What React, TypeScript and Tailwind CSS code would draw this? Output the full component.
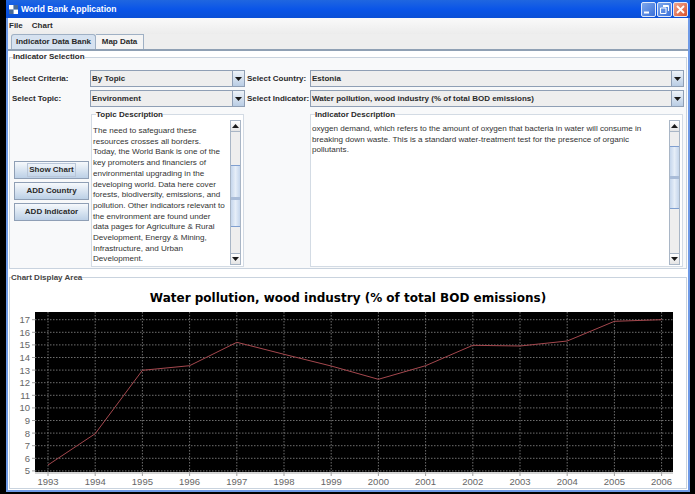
const topicText = [
  'The need to safeguard these',
  'resources crosses all borders.',
  'Today, the World Bank is one of the',
  'key promoters and financiers of',
  'environmental upgrading in the',
  'developing world. Data here cover',
  'forests, biodiversity, emissions, and',
  'pollution. Other indicators relevant to',
  'the environment are found under',
  'data pages for Agriculture & Rural',
  'Development, Energy & Mining,',
  'Infrastructure, and Urban',
  'Development.',
];

const indicatorText = [
  'oxygen demand, which refers to the amount of oxygen that bacteria in water will consume in',
  'breaking down waste. This is a standard water-treatment test for the presence of organic',
  'pollutants.',
];

const years = [1993, 1994, 1995, 1996, 1997, 1998, 1999, 2000, 2001, 2002, 2003, 2004, 2005, 2006];
const yTicks = [17, 16, 15, 14, 13, 12, 11, 10, 9, 8, 7, 6, 5];
const lineY = [153, 121.7, 58.3, 53.7, 30.3, 42.3, 54, 67.3, 53.7, 33.3, 34, 29, 9.3, 7.7];

const xAt = (i: number) => 37 + i * 47.2;
const yAt = (t: number) => 7.7 + (17 - t) * 12.6;

function Arrow({ up = false }: { up?: boolean }) {
  return (
    <svg width="7" height="4" viewBox="0 0 7 4" className="block">
      <path d={up ? 'M3.5 0 L7 4 L0 4 Z' : 'M0 0 L7 0 L3.5 4 Z'} fill="#1a1a1a" />
    </svg>
  );
}

function Combo({ value }: { value: string }) {
  return (
    <div className="flex h-[17px] min-w-0 flex-1 border border-[#8f9fb5] bg-[#eeeeee]">
      <div className="flex-1 pl-[1px] text-[8px] leading-[15px] font-bold text-[#2a2a2a]">{value}</div>
      <div className="flex w-[12px] items-center justify-center border-l border-[#8f9fb5] bg-gradient-to-b from-[#eef3f9] to-[#b9cde4]">
        <Arrow />
      </div>
    </div>
  );
}

function Scrollbar({ thumbTop, thumbHeight, gripAt }: { thumbTop: string; thumbHeight: string; gripAt: string }) {
  return (
    <div className="flex w-[11px] shrink-0 flex-col border border-[#a9b6c6] bg-[#eeeeee]">
      <div className="flex h-[11px] items-center justify-center border-b border-[#a9b6c6] bg-gradient-to-b from-white to-[#e4e4e4]">
        <Arrow up />
      </div>
      <div className="flex flex-1 flex-col">
        <div className={thumbTop} />
        <div className={`${thumbHeight} flex flex-col border-y border-[#7f9fd0] bg-gradient-to-r from-[#c5d6ec] via-[#e6eef8] to-[#c5d6ec]`}>
          <div className={gripAt} />
          <div className="h-[3px] bg-[#a9bcd8]" />
        </div>
      </div>
      <div className="flex h-[11px] items-center justify-center border-t border-[#a9b6c6] bg-gradient-to-b from-white to-[#e4e4e4]">
        <Arrow />
      </div>
    </div>
  );
}

function ActionButton({ label, focused = false }: { label: string; focused?: boolean }) {
  return (
    <button className="flex h-[18px] w-[75px] items-center justify-center border border-[#8f9fb5] bg-gradient-to-b from-[#f6f9fc] to-[#bcd0e6] text-[8px] font-bold text-[#2a2a2a]">
      <span className={focused ? 'border border-[#b9c6d8] px-[1px] leading-[12px]' : 'leading-[12px]'}>{label}</span>
    </button>
  );
}

function TitleButton({ kind }: { kind: 'min' | 'max' | 'close' }) {
  const bg =
    kind === 'close'
      ? 'bg-gradient-to-br from-[#eda58e] to-[#d9502a]'
      : 'bg-gradient-to-br from-[#7fa8ec] to-[#3a6fd8]';
  return (
    <div className={`flex h-[15px] w-[15px] items-center justify-center rounded-[2px] border border-[#dfe9fa] ${bg}`}>
      <svg width="11" height="11" viewBox="0 0 11 11">
        {kind === 'min' && <rect x="1" y="7.5" width="5" height="2" fill="#fff" />}
        {kind === 'max' && (
          <path d="M4 1.5h5.5v5.5M1.5 4h5.5v5.5h-5.5z M4 2.5h5.5" fill="none" stroke="#fff" strokeWidth="1" />
        )}
        {kind === 'close' && <path d="M2 2l7 7M9 2l-7 7" stroke="#fff" strokeWidth="1.8" />}
      </svg>
    </div>
  );
}

function LineChart() {
  return (
    <svg width="668" height="176" viewBox="0 0 668 176" className="block">
      <rect x="24" y="0" width="638" height="160" fill="#000" />
      {yTicks.map((t) => (
        <g key={t}>
          <line x1="24" x2="662" y1={yAt(t)} y2={yAt(t)} stroke="#8a8a8a" strokeWidth="0.8" strokeDasharray="1.5 1.5" />
          <line x1="21" x2="24" y1={yAt(t)} y2={yAt(t)} stroke="#888" strokeWidth="0.8" />
          <text x="19" y={yAt(t) + 3.5} textAnchor="end" fontSize="9.5" fill="#666" fontFamily="'Liberation Sans', sans-serif">
            {t}
          </text>
        </g>
      ))}
      {years.map((year, i) => (
        <g key={year}>
          <line x1={xAt(i)} x2={xAt(i)} y1="0" y2="160" stroke="#8a8a8a" strokeWidth="0.8" strokeDasharray="1.5 1.5" />
          <line x1={xAt(i)} x2={xAt(i)} y1="160" y2="164" stroke="#888" strokeWidth="0.8" />
          <text x={xAt(i)} y="173" textAnchor="middle" fontSize="9.5" fill="#666" fontFamily="'Liberation Sans', sans-serif">
            {year}
          </text>
        </g>
      ))}
      <line x1="24" x2="662" y1="161" y2="161" stroke="#a8a8a8" strokeWidth="1" />
      <polyline
        points={lineY.map((y, i) => `${xAt(i)},${y}`).join(' ')}
        fill="none"
        stroke="#a5484e"
        strokeWidth="1"
      />
    </svg>
  );
}

export default function App() {
  return (
    <div className="flex h-[494px] w-[695px] bg-black pr-[5px] pb-[2px] pl-[6px] font-['Liberation_Sans',sans-serif]">
      <div className="flex w-[684px] min-w-0 flex-col border-x-[2px] border-b-[2px] border-[#6f9ae6] bg-[#eef0f3]">
        {/* Title bar */}
        <div className="mx-[-2px] flex h-[18px] items-center bg-gradient-to-b from-[#1f66e0] via-[#0a55e8] to-[#0a4fd6] pr-[2px] pl-[3px]">
          <div className="grid h-[9px] w-[9px] grid-cols-2 gap-[1px] bg-[#8fa8c8]">
            <div className="bg-white" />
            <div className="bg-[#4a6a94]" />
            <div className="bg-[#4a6a94]" />
            <div className="bg-white" />
          </div>
          <div className="ml-[3px] flex-1 text-[8.5px] font-bold text-white">World Bank Application</div>
          <div className="flex gap-[1px]">
            <TitleButton kind="min" />
            <TitleButton kind="max" />
            <TitleButton kind="close" />
          </div>
        </div>

        {/* Menu */}
        <div className="flex h-[16px] items-center gap-[9px] bg-gradient-to-b from-[#fafafa] to-[#ececec] pl-[1px] text-[8px] font-bold text-[#2a2a2a]">
          <span>File</span>
          <span>Chart</span>
        </div>

        {/* Tabs */}
        <div className="flex h-[17px] items-end border-b-[2px] border-[#8fa0b4] bg-[#eeeeee] pl-[3px]">
          <div className="flex h-[15px] w-[85px] items-center justify-center rounded-t-[3px] border border-b-0 border-[#9fb0c4] bg-[#d6e2f0] text-[8px] font-bold whitespace-nowrap text-[#2a2a2a]">
            Indicator Data Bank
          </div>
          <div className="flex h-[15px] w-[48px] items-center justify-center border border-b-0 border-l-0 border-[#9fb0c4] bg-[#f4f4f4] text-[8px] font-bold whitespace-nowrap text-[#2a2a2a]">
            Map Data
          </div>
        </div>

        {/* Tab content */}
        <div className="flex flex-1 flex-col gap-[3px] bg-white px-[1px] pb-[1px]">
          <fieldset className="flex h-[218px] min-w-0 flex-col border border-[#c9d3de] bg-[#f8f9fa] px-[2px]">
            <legend className="ml-[1px] text-[8px] leading-[12px] font-bold text-[#2a2a2a]">Indicator Selection</legend>
            <div className="mt-[7px] flex flex-col gap-[3px] text-[8px] font-bold text-[#2a2a2a]">
              <div className="flex items-center">
                <span className="w-[78px]">Select Criteria:</span>
                <div className="flex w-[155px]">
                  <Combo value="By Topic" />
                </div>
                <span className="w-[65px] pl-[2px] whitespace-nowrap">Select Country:</span>
                <Combo value="Estonia" />
              </div>
              <div className="flex items-center">
                <span className="w-[78px]">Select Topic:</span>
                <div className="flex w-[155px]">
                  <Combo value="Environment" />
                </div>
                <span className="w-[65px] pl-[2px] whitespace-nowrap">Select Indicator:</span>
                <Combo value="Water pollution, wood industry (% of total BOD emissions)" />
              </div>
            </div>

            <div className="mt-[2px] flex flex-1 pr-[1px] pb-[2px]">
              <div className="flex w-[79px] shrink-0 flex-col gap-[3px] pt-[52px] pl-[2px]">
                <ActionButton label="Show Chart" focused />
                <ActionButton label="ADD Country" />
                <ActionButton label="ADD Indicator" />
              </div>
              <fieldset className="flex w-[153px] min-w-0 shrink-0 flex-col border border-[#d3dbe4] bg-white pr-[2px] pb-[1px] pl-[1px]">
                <legend className="ml-[3px] text-[8px] leading-[11px] font-bold text-[#2a2a2a]">Topic Description</legend>
                <div className="flex flex-1">
                  <div className="min-w-0 flex-1 pt-[6px] text-[8.1px] leading-[10.7px] whitespace-nowrap text-[#333]">
                    {topicText.map((line) => (
                      <div key={line}>{line}</div>
                    ))}
                  </div>
                  <Scrollbar thumbTop="h-[33px]" thumbHeight="h-[62px]" gripAt="h-[31px]" />
                </div>
              </fieldset>
              <div className="w-[66px] shrink-0" />
              <fieldset className="flex min-w-0 flex-1 flex-col border border-[#d3dbe4] bg-white pr-[2px] pb-[1px] pl-[1px]">
                <legend className="ml-[3px] text-[8px] leading-[11px] font-bold text-[#2a2a2a]">Indicator Description</legend>
                <div className="flex flex-1">
                  <div className="min-w-0 flex-1 pt-[4px] text-[8.1px] leading-[10.7px] whitespace-nowrap text-[#333]">
                    {indicatorText.map((line) => (
                      <div key={line}>{line}</div>
                    ))}
                  </div>
                  <Scrollbar thumbTop="h-[14px]" thumbHeight="h-[63px]" gripAt="h-[29px]" />
                </div>
              </fieldset>
            </div>
          </fieldset>

          <fieldset className="flex min-w-0 flex-1 flex-col border border-[#c9d3de] bg-white px-[1px]">
            <legend className="text-[8px] leading-[11px] font-bold text-[#444]">Chart Display Area</legend>
            <div className="mt-[6px] text-center font-['DejaVu_Sans',sans-serif] text-[12px] leading-[18px] font-bold text-black">
              Water pollution, wood industry (% of total BOD emissions)
            </div>
            <div className="mt-[5px]">
              <LineChart />
            </div>
          </fieldset>
        </div>
      </div>
    </div>
  );
}
